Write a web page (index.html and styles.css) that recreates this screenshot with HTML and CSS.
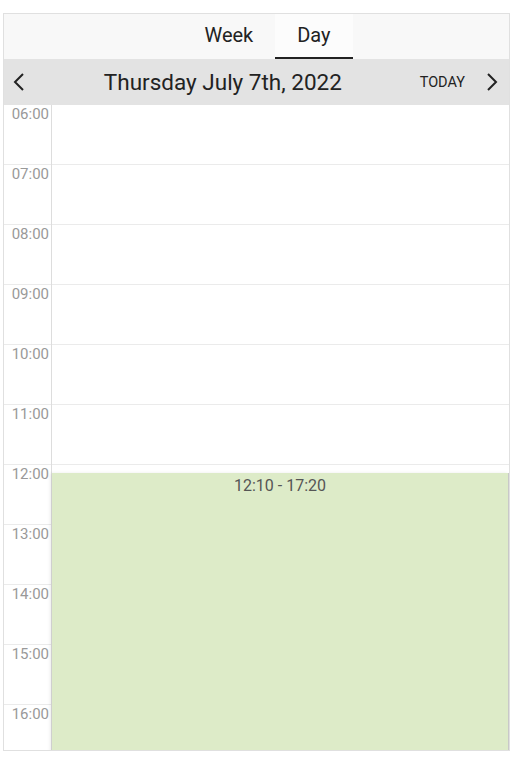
FILE: index.html
```html
<!DOCTYPE html>
<html>
<head>
<meta charset="utf-8">
<link rel="stylesheet" href="styles.css">
</head>
<body>
<div class="cal">
  <div class="tabs">
    <div class="tab">Week</div>
    <div class="tab active">Day</div>
  </div>
  <div class="nav">
    <button class="arrow prev"><svg width="14" height="20" viewBox="0 0 14 20"><path d="M11 2 L3 10 L11 18" fill="none" stroke="#222" stroke-width="2"/></svg></button>
    <div class="title">Thursday July 7th, 2022</div>
    <button class="today">TODAY</button>
    <button class="arrow next"><svg width="14" height="20" viewBox="0 0 14 20"><path d="M3 2 L11 10 L3 18" fill="none" stroke="#222" stroke-width="2"/></svg></button>
  </div>
  <div class="grid">
    <div class="times">
      <div class="row"><span class="label">06:00</span></div>
      <div class="row"><span class="label">07:00</span></div>
      <div class="row"><span class="label">08:00</span></div>
      <div class="row"><span class="label">09:00</span></div>
      <div class="row"><span class="label">10:00</span></div>
      <div class="row"><span class="label">11:00</span></div>
      <div class="row"><span class="label">12:00</span></div>
      <div class="row"><span class="label">13:00</span></div>
      <div class="row"><span class="label">14:00</span></div>
      <div class="row"><span class="label">15:00</span></div>
      <div class="row"><span class="label">16:00</span></div>
    </div>
    <div class="day">
      <div class="slot"></div><div class="slot"></div><div class="slot"></div><div class="slot"></div>
      <div class="slot"></div><div class="slot"></div><div class="slot"></div><div class="slot"></div>
      <div class="slot"></div><div class="slot"></div><div class="slot"></div>
      <div class="event" style="top: 368px; height: 310px;">12:10 - 17:20</div>
    </div>
  </div>
</div>
</body>
</html>
```

FILE: styles.css
```css
* { box-sizing: border-box; }
html, body { margin: 0; padding: 0; background: #fff; }
body { padding: 13px 11px 0 3px; font-family: Roboto, "Liberation Sans", sans-serif; color: #222; }

.cal {
  width: 507px;
  height: 738px;
  border: 1px solid #e0e0e0;
  display: flex;
  flex-direction: column;
  overflow: hidden;
}

.tabs {
  height: 45px;
  background: #f8f8f8;
  display: flex;
  justify-content: center;
  flex-shrink: 0;
  padding-left: 22px;
}
.tab {
  padding: 0 22px;
  font-size: 20px;
  line-height: 43px;
  text-align: center;
  border-bottom: 2px solid transparent;
  color: #222;
}
.tab.active {
  background: #fcfcfc;
  border-bottom-color: #222;
}

.nav {
  height: 46px;
  background: #e3e3e3;
  display: flex;
  align-items: center;
  flex-shrink: 0;
  padding: 0 8px 0 6px;
}
.nav button {
  background: none;
  border: 0;
  padding: 0;
  font-family: inherit;
  color: #222;
  cursor: pointer;
}
.arrow { width: 18px; height: 24px; display: flex; align-items: center; justify-content: center; }
.title {
  flex: 1;
  text-align: center;
  font-size: 22.5px;
  padding-left: 2px;
  padding-right: 4px;
}
.today {
  font-size: 14.5px;
  margin-right: 18px;
}

.grid {
  flex: 1;
  display: flex;
  overflow: hidden;
}
.times {
  width: 48px;
  border-right: 1px solid #ddd;
  flex-shrink: 0;
}
.row {
  height: 60px;
  border-bottom: 1px solid #ebebeb;
  text-align: right;
  padding: 1px 2px 0 0;
  font-size: 15px;
  color: #999;
  line-height: 17px;
}
.day {
  flex: 1;
  position: relative;
}
.slot {
  height: 60px;
  border-bottom: 1px solid #ebebeb;
}
.event {
  position: absolute;
  left: 0;
  right: 0;
  background: #ddebc8;
  border-right: 1px solid #c8c8c8;
  box-shadow: -2px 0 3px rgba(0,0,0,0.08);
  text-align: center;
  font-size: 16px;
  color: #555;
  padding-top: 3px;
}
```
